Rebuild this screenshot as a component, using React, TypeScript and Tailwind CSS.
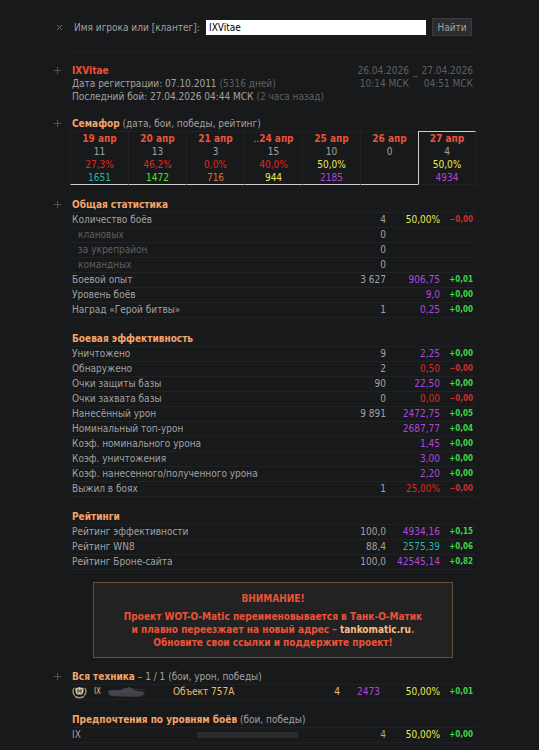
import { useState } from "react";
import type { ReactNode } from "react";

interface StatRow {
  label: string;
  sub?: boolean;
  total?: string;
  value?: string;
  color?: string;
  delta?: string;
}

interface Day {
  date: string;
  more?: boolean;
  battles: string;
  wins?: string;
  winsColor?: string;
  rating?: string;
  ratingColor?: string;
}

const PURPLE = "text-[#b247dc]";
const YELLOW = "text-[#ebeb50]";
const RED = "text-[#e0241f]";
const TEAL = "text-[#2fb3a0]";

const days: Day[] = [
  { date: "19 апр", battles: "11", wins: "27,3%", winsColor: RED, rating: "1651", ratingColor: TEAL },
  { date: "20 апр", battles: "13", wins: "46,2%", winsColor: RED, rating: "1472", ratingColor: "text-[#45e62c]" },
  { date: "21 апр", battles: "3", wins: "0,0%", winsColor: RED, rating: "716", ratingColor: "text-[#dd7136]" },
  { date: "24 апр", more: true, battles: "15", wins: "40,0%", winsColor: RED, rating: "944", ratingColor: YELLOW },
  { date: "25 апр", battles: "10", wins: "50,0%", winsColor: YELLOW, rating: "2185", ratingColor: PURPLE },
  { date: "26 апр", battles: "0" },
  { date: "27 апр", battles: "4", wins: "50,0%", winsColor: YELLOW, rating: "4934", ratingColor: PURPLE },
];

const generalRows: StatRow[] = [
  { label: "Количество боёв", total: "4", value: "50,00%", color: YELLOW, delta: "−0,00" },
  { label: "клановых", sub: true, total: "0" },
  { label: "за укрепрайон", sub: true, total: "0" },
  { label: "командных", sub: true, total: "0" },
  { label: "Боевой опыт", total: "3 627", value: "906,75", color: PURPLE, delta: "+0,01" },
  { label: "Уровень боёв", value: "9,0", color: PURPLE, delta: "+0,00" },
  { label: "Наград «Герой битвы»", total: "1", value: "0,25", color: PURPLE, delta: "+0,00" },
];

const combatRows: StatRow[] = [
  { label: "Уничтожено", total: "9", value: "2,25", color: PURPLE, delta: "+0,00" },
  { label: "Обнаружено", total: "2", value: "0,50", color: RED, delta: "−0,00" },
  { label: "Очки защиты базы", total: "90", value: "22,50", color: PURPLE, delta: "+0,00" },
  { label: "Очки захвата базы", total: "0", value: "0,00", color: RED, delta: "−0,00" },
  { label: "Нанесённый урон", total: "9 891", value: "2472,75", color: PURPLE, delta: "+0,05" },
  { label: "Номинальный топ-урон", value: "2687,77", color: PURPLE, delta: "+0,04" },
  { label: "Коэф. номинального урона", value: "1,45", color: PURPLE, delta: "+0,00" },
  { label: "Коэф. уничтожения", value: "3,00", color: PURPLE, delta: "+0,00" },
  { label: "Коэф. нанесенного/полученного урона", value: "2,20", color: PURPLE, delta: "+0,00" },
  { label: "Выжил в боях", total: "1", value: "25,00%", color: RED, delta: "−0,00" },
];

const ratingRows: StatRow[] = [
  { label: "Рейтинг эффективности", total: "100,0", value: "4934,16", color: PURPLE, delta: "+0,15" },
  { label: "Рейтинг WN8", total: "88,4", value: "2575,39", color: TEAL, delta: "+0,06" },
  { label: "Рейтинг Броне-сайта", total: "100,0", value: "42545,14", color: PURPLE, delta: "+0,82" },
];

function Toggle({ label }: { label: string }) {
  const [open, setOpen] = useState(true);
  return (
    <button
      type="button"
      aria-label={label}
      aria-expanded={open}
      onClick={() => setOpen(!open)}
      className="block pt-[2px] text-[#555555]"
    >
      <svg width="9" height="9" viewBox="0 0 9 9" stroke="currentColor">
        <path d="M4.5 1v7M1 4.5h7" />
      </svg>
    </button>
  );
}

interface SectionProps {
  toggle?: string;
  className?: string;
  children: ReactNode;
}

function Section({ toggle, className, children }: SectionProps) {
  return (
    <section className={`flex ${className ?? ""}`}>
      <div className="w-4 shrink-0">{toggle && <Toggle label={toggle} />}</div>
      <div className="min-w-0 flex-1">{children}</div>
    </section>
  );
}

function Title({ children, note }: { children: ReactNode; note?: string }) {
  return (
    <h2 className="px-[3px] leading-[14px]">
      <span className="font-bold text-[#f4a469]">{children}</span>
      {note && ` ${note}`}
    </h2>
  );
}

function Delta({ value }: { value?: string }) {
  const color = value?.startsWith("+") ? "text-[#3fd548]" : "text-[#c9302c]";
  return (
    <td className={`w-9 pr-[3px] text-right text-[8px] font-bold ${color}`}>
      {value}
    </td>
  );
}

function StatTable({ rows }: { rows: StatRow[] }) {
  return (
    <table className="w-full table-fixed border-b border-[#202224] leading-[14px]">
      <tbody>
        {rows.map((row) => (
          <tr key={row.label} className="border-t border-[#202224]">
            <th
              scope="row"
              className={`text-left font-normal ${
                row.sub ? "pl-[9px] text-[#606060]" : "pl-[3px]"
              }`}
            >
              {row.label}
            </th>
            <td className="w-16 text-right">{row.total}</td>
            <td className={`w-[54px] text-right ${row.color ?? ""}`}>
              {row.value}
            </td>
            <Delta value={row.delta} />
          </tr>
        ))}
      </tbody>
    </table>
  );
}

function dayCell(i: number, first = false) {
  // the current day is cut out of the white base line
  if (i === days.length - 1) {
    return `border-x border-l-[#d0d0d0] border-r-[#202224] p-0 ${
      first ? "border-t border-t-[#d0d0d0]" : ""
    }`;
  }
  return `border-l border-[#202224] p-0 ${first ? "border-t" : ""}`;
}

function Semaphore() {
  return (
    <table className="ml-px w-[calc(100%-1px)] table-fixed border-separate border-spacing-0 text-center leading-[13px]">
      <thead>
        <tr>
          {days.map((day, i) => (
            <th key={day.date} scope="col" className={dayCell(i, true)}>
              {day.more && <span className="font-normal">..</span>}
              <span className="text-[#ea5337]">{day.date}</span>
            </th>
          ))}
        </tr>
      </thead>
      <tbody>
        <tr>
          {days.map((day, i) => (
            <td key={day.date} className={dayCell(i)}>{day.battles}</td>
          ))}
        </tr>
        <tr>
          {days.map((day, i) => (
            <td key={day.date} className={`${dayCell(i)} ${day.winsColor ?? ""}`}>
              {day.wins}
            </td>
          ))}
        </tr>
        <tr>
          {days.map((day, i) => (
            <td
              key={day.date}
              className={`${dayCell(i)} border-b ${
                i === days.length - 1 ? "border-b-[#202224]" : "border-b-[#d0d0d0]"
              } ${day.ratingColor ?? ""}`}
            >
              {day.rating}
            </td>
          ))}
        </tr>
      </tbody>
    </table>
  );
}

function MasteryBadge() {
  return (
    <svg width="15" height="13" viewBox="0 0 15 13" fill="none">
      <path d="M2 2C.6 4.500.8 7.500 3 9.500M13 2c1.400 2.500 1.200 5.500-1 7.500" stroke="#a39b86" strokeWidth="1.300" />
      <path d="M3 10.500c2.500 1.300 6.500 1.300 9 0" stroke="#9a917c" strokeWidth="1.500" />
      <path d="M3.500 1.500L5 2l2.500-1L10 2l1.500-.5V6L10 8.500H5L3.500 6z" fill="#cfc4a4" />
      <path d="M6 7V3.500L7.500 5.500 9 3.500V7" stroke="#3a3326" />
    </svg>
  );
}

function TankIcon() {
  return (
    <svg width="37" height="10" viewBox="0 0 37 10">
      <path
        d="M0 4.200l2-1 11.500-.5 2.300-1.400 4-.5.8-.8 1.500.1.300.8 3.500.9.8.7 9.800-.1v.6l-9.500.4-.7.6 8.700.5 1.800 1-1 2.100-2.600 1.800-12 .4L6 9.300 2 8.600.5 7z"
        fill="#42424d"
      />
      <path d="M1 5.200l13-.6 20 .8M14 2.900l11 .3" stroke="#50505a" strokeWidth=".6" fill="none" />
    </svg>
  );
}

export default function App() {
  const [name, setName] = useState("IXVitae");

  return (
    <div className="min-h-screen bg-[#17191a] font-['DejaVu_Sans_Condensed','DejaVu_Sans',sans-serif] text-[10px] leading-[13px] text-[#a2a2a2]">
      <main className="pt-[18px] pr-[63px] pb-2 pl-[53px]">
        <form
          onSubmit={(e) => e.preventDefault()}
          className="flex items-center pr-1"
        >
          <button
            type="button"
            aria-label="Очистить"
            onClick={() => setName("")}
            className="w-[21px] shrink-0 pl-[3px] text-[#6b6b6b]"
          >
            <svg width="7" height="7" viewBox="0 0 7 7" stroke="currentColor">
              <path d="M1 1l5 5M6 1L1 6" />
            </svg>
          </button>
          <label htmlFor="player" className="w-[132px] shrink-0 whitespace-nowrap">
            Имя игрока или [клантег]:
          </label>
          <input
            id="player"
            type="text"
            value={name}
            onChange={(e) => setName(e.target.value)}
            className="h-[15px] min-w-0 flex-1 bg-white px-[3px] text-black"
          />
          <button
            type="submit"
            className="ml-[6px] h-[18px] w-10 shrink-0 border border-[#3a3b3c] bg-[#2b2c2d]"
          >
            Найти
          </button>
        </form>

        <hr className="mt-4 mb-[11px] ml-4 border-[#202224]" />

        <Section toggle="Игрок">
          <div className="flex justify-between px-[3px]">
            <div className="whitespace-nowrap">
              <h1 className="font-bold text-[#ea5337]">IXVitae</h1>
              <p>
                Дата регистрации: 07.10.2011{" "}
                <span className="text-[#606060]">(5316 дней)</span>
              </p>
              <p>
                Последний бой: 27.04.2026 04:44 МСК{" "}
                <span className="text-[#606060]">(2 часа назад)</span>
              </p>
            </div>
            <div className="flex gap-1 text-right whitespace-nowrap text-[#606060]">
              <p>
                26.04.2026
                <br />
                10:14 МСК
              </p>
              <p>_</p>
              <p>
                27.04.2026
                <br />
                04:51 МСК
              </p>
            </div>
          </div>
        </Section>

        <Section toggle="Семафор" className="mt-[14px]">
          <Title note="(дата, бои, победы, рейтинг)">Семафор</Title>
          <Semaphore />
        </Section>

        <Section toggle="Общая статистика" className="mt-[13px]">
          <Title>Общая статистика</Title>
          <StatTable rows={generalRows} />
        </Section>

        <Section className="mt-[14px]">
          <Title>Боевая эффективность</Title>
          <StatTable rows={combatRows} />
        </Section>

        <Section className="mt-[13px]">
          <Title>Рейтинги</Title>
          <StatTable rows={ratingRows} />
        </Section>

        <aside className="mt-3 mr-[23px] ml-10 border border-[#65503b] bg-[#222222] pt-[9px] pb-2 text-center font-bold text-[#ea5337]">
          <p className="mb-[5px]">ВНИМАНИЕ!</p>
          <p>
            Проект WOT-O-Matic переименовывается в Танк-О-Матик
            <br />и плавно переезжает на новый адрес –{" "}
            <a href="#tankomatic" className="text-[#f7bd85]">tankomatic.ru</a>.
            <br />
            Обновите свои ссылки и поддержите проект!
          </p>
        </aside>

        <Section toggle="Вся техника" className="mt-3">
          <Title note="– 1 / 1 (бои, урон, победы)">Вся техника</Title>
          <table className="w-full table-fixed border-y border-[#202224] leading-[14px]">
            <tbody>
              <tr className="text-[#eebb78]">
                <td className="w-[22px] pl-[3px]"><MasteryBadge /></td>
                <td className="w-[17px] pl-[3px] text-[8px]">IX</td>
                <td className="w-[65px]"><TankIcon /></td>
                <td>Объект 757А</td>
                <td className="w-8 text-right">4</td>
                <td className={`w-10 text-right ${PURPLE}`}>2473</td>
                <td className={`w-[60px] text-right ${YELLOW}`}>50,00%</td>
                <Delta value="+0,01" />
              </tr>
            </tbody>
          </table>
        </Section>

        <Section className="mt-[13px]">
          <Title note="(бои, победы)">Предпочтения по уровням боёв</Title>
          <table className="w-full table-fixed border-y border-[#202224] leading-[14px]">
            <tbody>
              <tr>
                <th scope="row" className="w-32 pl-[3px] text-left font-normal">IX</th>
                <td className="pr-[60px]">
                  <div className="h-[6px] bg-[#2a2b2c]" />
                </td>
                <td className="w-7 text-right">4</td>
                <td className={`w-[54px] text-right ${YELLOW}`}>50,00%</td>
                <Delta value="+0,00" />
              </tr>
            </tbody>
          </table>
        </Section>
      </main>
    </div>
  );
}
